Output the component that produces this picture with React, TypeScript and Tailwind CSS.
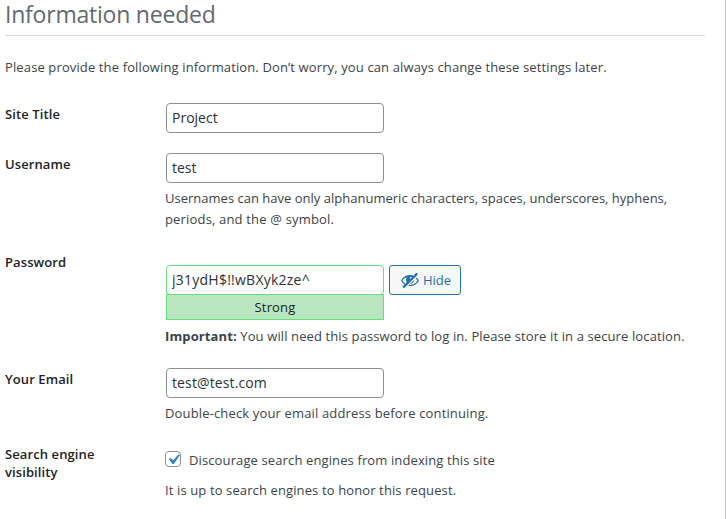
import React from "react";

const inputBase =
  "block h-[30px] w-[218px] rounded-[4px] border bg-white pb-[2px] pl-[5px] text-[14px] leading-[26px] text-[#2c3338] outline-none";

function Row({ label, className, labelClass, children }: {
  label: React.ReactNode;
  className: string;
  labelClass: string;
  children: React.ReactNode;
}) {
  return (
    <div className={`flex ${className}`}>
      <div className={`w-[160px] shrink-0 text-[13px] font-semibold leading-[18px] tracking-[0.1px] text-[#1d2327] ${labelClass}`}>{label}</div>
      <div className="flex-1">{children}</div>
    </div>
  );
}

function HiddenIcon() {
  return (
    <svg viewBox="0 0 20 20" className="h-5 w-5 shrink-0" fill="#2271b1" fillRule="evenodd">
      <path d="M17.2 3.3l.16.17c.39.39.39 1.02 0 1.41L4.55 17.7c-.39.39-1.03.39-1.41 0l-.17-.17c-.39-.39-.39-1.02 0-1.41l1.59-1.6c-1.57-1-2.76-2.3-3.56-3.93.81-1.65 2.03-2.98 3.64-3.99S8.04 5.09 10 5.09c1.2 0 2.33.21 3.4.6l2.38-2.39c.39-.39 1.03-.39 1.42 0zm-7.09 4.01c-.23.25-.34.54-.34.88 0 .31.12.58.31.81l1.8-1.79c-.13-.12-.28-.21-.45-.26-.11-.01-.28-.03-.49-.04-.33.03-.6.16-.83.4zM2.4 10.59c.69 1.23 1.71 2.25 3.05 3.05l1.28-1.28c-.51-.69-.77-1.47-.77-2.36 0-1.06.36-1.98 1.09-2.76-1.04.27-1.96.7-2.76 1.26-.8.58-1.43 1.27-1.89 2.09zm13.22-2.13l.96-.96c1.02.86 1.83 1.89 2.42 3.09-.81 1.65-2.03 2.98-3.64 3.99s-3.4 1.51-5.36 1.51c-.63 0-1.24-.07-1.83-.18l1.07-1.07c.25.02.5.05.76.05 1.63 0 3.13-.4 4.5-1.21s2.4-1.84 3.1-3.09c-.46-.82-1.09-1.51-1.89-2.09-.03-.01-.06-.03-.09-.04zm-5.58 5.58l4-4c-.01 1.1-.41 2.04-1.18 2.81-.78.78-1.72 1.18-2.82 1.19z" />
    </svg>
  );
}

export default function App() {
  return (
    <div className="flex h-[519px] w-[726px] flex-col whitespace-nowrap border-r border-[#c3c4c7] bg-white pl-[5px] font-['Open_Sans','Noto_Sans',sans-serif] text-[13px] leading-[21px] text-[#3c434a]">
      <h1 className="h-9 w-[700px] border-b border-[#dcdcde] text-[23px] font-normal leading-[28px] tracking-[-0.22px] text-[#646970]">
        Information needed
      </h1>
      <p className="mt-[21px] tracking-[0.125px]">
        Please provide the following information. Don’t worry, you can always change these settings later.
      </p>
      <Row label="Site Title" className="mt-[25px] h-[50px]" labelClass="pt-[2px]">
        <input readOnly defaultValue="Project" className={`${inputBase} ml-px border-[#8c8f94]`} />
      </Row>
      <Row label="Username" className="h-[112px]" labelClass="pt-[2px]">
        <input readOnly defaultValue="test" className={`${inputBase} ml-px border-[#8c8f94]`} />
        <p className="mt-[5px]">
          <span className="tracking-[0.01px]">Usernames can have only alphanumeric characters, spaces, underscores, hyphens,</span>
          <br />
          <span className="tracking-[0.17px]">periods, and the @ symbol.</span>
        </p>
      </Row>
      <Row label="Password" className="h-[103px]" labelClass="-mt-[12px]">
        <div className="flex h-[29px] gap-[5px] pl-px">
          <input readOnly defaultValue="j31ydH$!!wBXyk2ze^" className={`${inputBase} border-[#68de7c] tracking-[0.24px]`} />
          <button className="flex h-[30px] w-[72px] items-center rounded-[3px] border border-[#2271b1] bg-[#f6f7f7] pl-[10px] text-[#2271b1]">
            <HiddenIcon />
            <span className="ml-[3px]">Hide</span>
          </button>
        </div>
        <div className="relative ml-px h-[26px] w-[218px] border border-[#68de7c] bg-[#b8e6bf] text-center leading-[25px] tracking-[0.15px] text-[#1d2327]">
          Strong
        </div>
        <p className="mt-[6px] tracking-[0.115px]">
          <b className="font-bold">Important:</b> You will need this password to log in. Please store it in a secure location.
        </p>
      </Row>
      <Row label="Your Email" className="h-[82px]" labelClass="pt-[2px]">
        <input readOnly defaultValue="test@test.com" className={`${inputBase} ml-px border-[#8c8f94] tracking-[0.12px]`} />
        <p className="mt-[5px] tracking-[0.15px]">Double-check your email address before continuing.</p>
      </Row>
      <Row label={<>Search engine<br />visibility</>} className="" labelClass="-mt-[5px]">
        <div className="flex h-[21px] items-center">
          <span className="mb-[3px] flex h-4 w-4 items-center justify-center rounded-[4px] border border-[#8c8f94] bg-white">
            <svg viewBox="0 0 20 20" className="h-[21px] w-[21px] shrink-0" fill="#3582c4">
              <path d="M14.83 4.89l1.34.94-5.81 8.38H9.02L5.78 9.67l1.34-1.25 2.57 2.4z" />
            </svg>
          </span>
          <span className="ml-2 tracking-[0.12px]">Discourage search engines from indexing this site</span>
        </div>
        <p className="mt-[9px] tracking-[0.12px]">It is up to search engines to honor this request.</p>
      </Row>
    </div>
  );
}
